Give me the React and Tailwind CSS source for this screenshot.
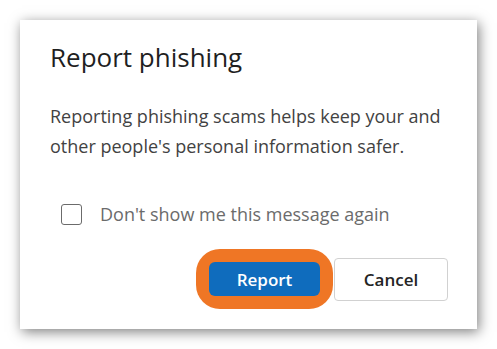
import React, { useState } from "react";

const font = { fontFamily: '"Open Sans", "Noto Sans", Arial, sans-serif' };

function Checkbox({ checked, onChange, label }) {
  return (
    <label className="flex items-center cursor-pointer select-none">
      <span
        className="w-[21px] h-[21px] rounded-[3px] border-[1.5px] border-[#6b6b6b] bg-white flex items-center justify-center"
        onClick={() => onChange?.(!checked)}
      >
        {checked ? <span className="text-[13px] leading-none text-[#424242]">✓</span> : null}
      </span>
      <span className="ml-[18px] text-[18px] leading-[22px] text-[#6b6b6b]">{label}</span>
    </label>
  );
}

export default function App() {
  const [dontShow, setDontShow] = useState(false);

  return (
    <div className="min-h-screen bg-white p-[20px]" style={font}>
      <div className="w-[457px] h-[309px] bg-white pl-[30px] pr-[29px] pt-[20px] shadow-[2px_3px_12px_rgba(0,0,0,0.5)]">
        <h1 className="text-[26px] leading-[34px] text-[#1f1f1f]">Report phishing</h1>

        <p className="mt-[27px] text-[18px] leading-[30px] text-[#424242]">
          Reporting phishing scams helps keep your and
          <br />
          other people's personal information safer.
        </p>

        <div className="mt-[42px] ml-[11px]">
          <Checkbox checked={dontShow} onChange={setDontShow} label="Don't show me this message again" />
        </div>

        <div className="mt-[24px] flex items-center justify-end">
          {/* orange highlight around the primary button */}
          <div className="rounded-[24px] bg-[#ef7625] px-[13px] py-[13px]">
            <button className="w-[111px] h-[34px] rounded-[6px] bg-[#0f6cbd] text-white text-[17px] font-semibold leading-none">
              Report
            </button>
          </div>
          <button className="ml-px w-[114px] h-[43px] rounded-[4px] border border-[#d1d1d1] bg-white text-[#242424] text-[17px] font-semibold leading-none">
            Cancel
          </button>
        </div>
      </div>
    </div>
  );
}
